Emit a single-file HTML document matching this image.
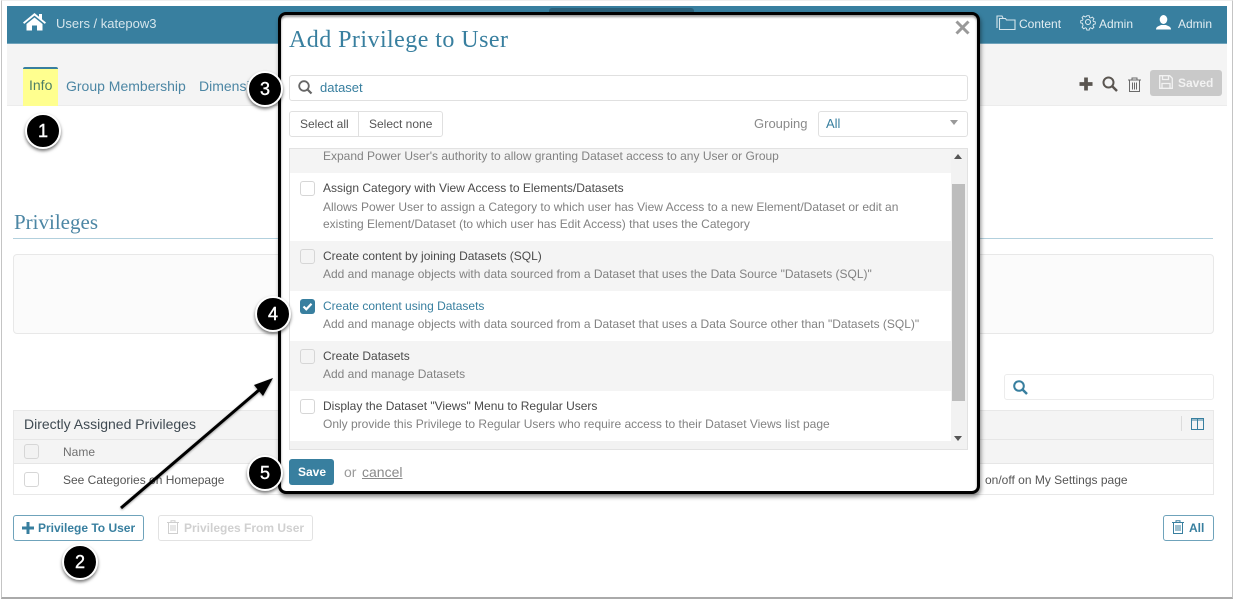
<!DOCTYPE html>
<html><head><meta charset="utf-8"><style>
*{box-sizing:border-box}
html,body{margin:0;padding:0;width:1234px;height:601px;overflow:hidden;background:#fff;font-family:"Liberation Sans",sans-serif;font-size:12px;color:#555}
.a{position:absolute;white-space:nowrap}
.b{position:absolute}
svg{position:absolute;overflow:visible}
.cb{position:absolute;width:15px;height:15px;background:#fff;border:1px solid #d6d6d6;border-radius:3px}
.num{position:absolute;width:36px;height:36px;border-radius:50%;background:#000;border:2px solid #fff;box-shadow:0 2px 3px rgba(0,0,0,.55);color:#fff;font-size:18px;font-weight:normal;-webkit-text-stroke:.4px #fff;text-align:center;line-height:32px}
.t{color:#4a4a4a;font-size:12px}
.d{color:#828282;font-size:12px}
.row{position:absolute;left:0;width:661px}
</style></head><body>
<div class="b" style="left:1px;top:0;width:1232px;height:599px;border:1px solid #c4c4c4;border-top-color:#eee;border-bottom:2px solid #aaa"></div>

<!-- top bar -->
<div class="b" style="left:7px;top:6px;width:1220px;height:38px;background:#387f9f;border-bottom:1px solid #6fa3bb"></div>
<div class="b" style="left:549px;top:8px;width:145px;height:6px;background:#2b6079;border-radius:3px 3px 0 0"></div>
<svg style="left:23px;top:13px" width="23" height="18" viewBox="0 0 23 18"><path d="M0 9.500 11.500 0 16 3.700V1h3v5.200l4 3.300-1.200 1.400L11.500 2.600 1.200 10.900z" fill="#fff"/><path d="M3.500 11 11.500 4.500 19.500 11v6.500h-5.500v-5h-5v5h-5.500z" fill="#fff"/></svg>
<div class="a" style="left:56px;top:16px;color:#d5e5ec;font-size:13px">Users / katepow3</div>
<svg style="left:996px;top:14px" width="20" height="17" viewBox="0 0 20 17" fill="none" stroke="#d5e5ec" stroke-width="1.100"><path d="M1 14V2h5l1 2"/><path d="M3.500 15.500V4.500h6l1 1.500h8.500v9.500z"/></svg>
<div class="a" style="left:1019px;top:17px;color:#e3eef3;font-size:12px">Content</div>
<svg style="left:1080px;top:14px" width="16" height="16" viewBox="0 0 16 16" fill="none" stroke="#e3eef3"><circle cx="8" cy="8" r="2.500"/><path d="M6.700 1h2.600l.4 2 1.300.6 1.800-1.100 1.800 1.800-1.100 1.800.6 1.300 2 .4v2.400l-2 .4-.6 1.300 1.100 1.800-1.800 1.800-1.800-1.100-1.300.6-.4 2H6.700l-.4-2-1.300-.6-1.800 1.100-1.800-1.800 1.100-1.800L1.900 9.400l-2-.4V6.600l2-.4.6-1.300-1.100-1.800 1.800-1.800 1.800 1.100 1.300-.6z" transform="translate(.8 .8) scale(.9)"/></svg>
<div class="a" style="left:1099px;top:17px;color:#e3eef3;font-size:12px">Admin</div>
<svg style="left:1156px;top:15px" width="15" height="15" viewBox="0 0 15 15" fill="#fff"><ellipse cx="7.500" cy="4.500" rx="3.800" ry="4.500"/><path d="M0 14.500c0-3 3-3.500 5-4.500h5c2 1 5 1.500 5 4.500z"/></svg>
<div class="a" style="left:1178px;top:17px;color:#e3eef3;font-size:12px">Admin</div>

<!-- tab bar -->
<div class="b" style="left:7px;top:44px;width:1220px;height:62px;background:#f4f4f4;border-bottom:1px solid #ececec"></div>
<div class="b" style="left:23px;top:67px;width:35px;height:39px;background:#ffff8f;border-top:2px solid #387f9f;border-radius:2px 2px 0 0"></div>
<div class="a" style="left:29px;top:77px;color:#4d7f66;font-size:14px">Info</div>
<div class="a" style="left:66px;top:78px;color:#4c86a4;font-size:14px">Group Membership</div>
<div class="a" style="left:199px;top:78px;color:#4c86a4;font-size:14px">Dimensions</div>

<svg style="left:1079px;top:77px" width="14" height="14" viewBox="0 0 14 14"><path d="M5 0h4v5h5v4H9v5H5V9H0V5h5z" transform="translate(.5 .5) scale(.93)" fill="#5a5550"/></svg>
<svg style="left:1102px;top:76px" width="16" height="16" viewBox="0 0 16 16" fill="none" stroke="#5a5550"><circle cx="6.500" cy="6.500" r="5" stroke-width="2"/><path d="M10.500 10.500 15 15" stroke-width="2.500"/></svg>
<svg style="left:1128px;top:77px" width="13" height="15" viewBox="0 0 13 15" fill="none" stroke="#6a6a6a"><path d="M0 3h13M4 3V1h5v2M1.500 3v11.500h10V3M4.500 5.500v7M6.500 5.500v7M8.500 5.500v7"/></svg>
<div class="b" style="left:1150px;top:70px;width:72px;height:26px;background:#c9c9c9;border-radius:3px"></div>
<svg style="left:1159px;top:75px" width="14" height="14" viewBox="0 0 14 14" fill="none" stroke="#f2f2f2" stroke-width="1.300"><path d="M.7.700h10l2.600 2.600v10H.7z"/><path d="M3.500 1v3.500h6V1M3 13V8.500h8V13"/></svg>
<div class="a" style="left:1178px;top:76px;color:#f2f2f2;font-size:12px;font-weight:bold">Saved</div>

<!-- privileges -->
<div class="a" style="left:14px;top:210px;font-family:'Liberation Serif',serif;font-size:21px;color:#4c86a4">Privileges</div>
<div class="b" style="left:13px;top:238px;width:1200px;height:1px;background:#b2d0dd"></div>
<div class="b" style="left:13px;top:254px;width:1201px;height:80px;background:#fbfbfb;border:1px solid #e8e8e8;border-radius:4px"></div>

<div class="b" style="left:1004px;top:374px;width:210px;height:26px;border:1px solid #ececec;border-radius:3px"></div>
<svg style="left:1013px;top:380px" width="15" height="15" viewBox="0 0 15 15" fill="none" stroke="#387f9f"><circle cx="6" cy="6" r="4.800" stroke-width="2"/><path d="M9.500 9.500 14 14" stroke-width="2.500"/></svg>

<div class="b" style="left:13px;top:410px;width:1201px;height:85px;border:1px solid #e8e8e8"></div>
<div class="b" style="left:14px;top:411px;width:1199px;height:29px;background:#f4f4f4;border-bottom:1px solid #e6e6e6"></div>
<div class="b" style="left:14px;top:440px;width:1199px;height:24px;background:#f4f4f4;border-bottom:1px solid #e6e6e6"></div>
<div class="a" style="left:24px;top:416px;color:#3f4a52;font-size:14px">Directly Assigned Privileges</div>
<div class="b" style="left:1181px;top:416px;width:1px;height:15px;background:#dcdcdc"></div>
<svg style="left:1191px;top:418px" width="13" height="12" viewBox="0 0 13 12" fill="none" stroke="#387f9f"><path d="M.5.500h12v11H.5zM6.500.500v11M.5 2h12"/></svg>
<div class="cb" style="left:24px;top:444px;background:#f2f2f2"></div>
<div class="a" style="left:63px;top:445px;color:#707070;font-size:12px">Name</div>
<div class="cb" style="left:24px;top:472px"></div>
<div class="a" style="left:63px;top:473px;color:#555;font-size:12px">See Categories on Homepage</div>
<div class="a" style="left:985px;top:473px;color:#555;font-size:12px">on/off on My Settings page</div>

<div class="b" style="left:13px;top:515px;width:131px;height:26px;border:1px solid #6fa3bb;border-radius:3px"></div>
<svg style="left:22px;top:522px" width="12" height="12" viewBox="0 0 12 12"><path d="M4.500 0h3v4.500H12v3H7.500V12h-3V7.500H0v-3h4.500z" fill="#387f9f"/></svg>
<div class="a" style="left:38px;top:521px;color:#387f9f;font-size:12px;font-weight:bold">Privilege To User</div>
<div class="b" style="left:158px;top:515px;width:155px;height:26px;border:1px solid #e2e2e2;border-radius:3px"></div>
<svg style="left:167px;top:520px" width="12" height="14" viewBox="0 0 12 14" fill="none" stroke="#cfcfcf"><path d="M0 2.500h12M4 2.500V.8h4v1.700M1.500 2.500v11h9v-11M4 5v6M6 5v6M8 5v6"/></svg>
<div class="a" style="left:184px;top:521px;color:#d0d0d0;font-size:12px;font-weight:bold">Privileges From User</div>
<div class="b" style="left:1163px;top:515px;width:51px;height:26px;border:1px solid #6fa3bb;border-radius:3px"></div>
<svg style="left:1172px;top:520px" width="12" height="14" viewBox="0 0 12 14" fill="none" stroke="#387f9f"><path d="M0 2.500h12M4 2.500V.8h4v1.700M1.500 2.500v11h9v-11M4 5v6M6 5v6M8 5v6"/></svg>
<div class="a" style="left:1189px;top:521px;color:#387f9f;font-size:12px;font-weight:bold">All</div>

<!-- arrow -->
<svg style="left:0;top:0" width="1234" height="601"><defs><filter id="s" x="-20%" y="-20%" width="140%" height="140%"><feDropShadow dx="0" dy="1" stdDeviation="1" flood-opacity=".4"/></filter></defs><g filter="url(#s)"><path d="M121 508 266 384" stroke="#000" stroke-width="3" fill="none"/><path d="M273 378 263 396 254 385z" fill="#000"/></g></svg>

<!-- modal -->
<div class="b" style="left:278px;top:12px;width:702px;height:482px;background:#fff;border:3px solid #000;border-radius:8px;box-shadow:1px 3px 4px rgba(0,0,0,.45),inset 0 2px 2px rgba(0,0,0,.4)"></div>
<div class="a" style="left:289px;top:27px;font-family:'Liberation Serif',serif;font-size:24px;color:#387f9f;letter-spacing:.45px">Add Privilege to User</div>
<svg style="left:955px;top:20px" width="15" height="15" viewBox="0 0 15 15"><path d="M1.500 1.500 13.500 13.500M13.500 1.500 1.500 13.500" stroke="#999" stroke-width="3"/></svg>

<div class="b" style="left:289px;top:75px;width:679px;height:26px;border:1px solid #e0e0e0;border-radius:3px"></div>
<svg style="left:298px;top:80px" width="15" height="15" viewBox="0 0 15 15" fill="none" stroke="#666"><circle cx="6" cy="6" r="4.800" stroke-width="1.800"/><path d="M9.500 9.500 13.500 13.500" stroke-width="2.200"/></svg>
<div class="a" style="left:320px;top:80px;color:#387f9f;font-size:13px">dataset</div>

<div class="b" style="left:289px;top:111px;width:70px;height:26px;border:1px solid #e0e0e0;border-radius:3px 0 0 3px"></div>
<div class="b" style="left:358px;top:111px;width:85px;height:26px;border:1px solid #e0e0e0;border-radius:0 3px 3px 0"></div>
<div class="a" style="left:300px;top:117px;color:#555;font-size:12px">Select all</div>
<div class="a" style="left:369px;top:117px;color:#555;font-size:12px">Select none</div>
<div class="a" style="left:754px;top:116px;color:#8a8a8a;font-size:13px">Grouping</div>
<div class="b" style="left:818px;top:111px;width:150px;height:26px;border:1px solid #e0e0e0;border-radius:3px"></div>
<div class="a" style="left:826px;top:116px;color:#387f9f;font-size:13px">All</div>
<div class="b" style="left:950px;top:120px;width:0;height:0;border:4px solid transparent;border-top:5px solid #999;border-left-width:4.500px;border-right-width:4.500px"></div>

<!-- list -->
<div class="b" style="left:289px;top:148px;width:679px;height:302px;border:1px solid #e2e2e2;background:#f2f2f2;overflow:hidden">
  <div class="row" style="top:0;height:24px;background:#f4f4f4"></div>
  <div class="row" style="top:24px;height:68px;background:#fff"></div>
  <div class="row" style="top:92px;height:50px;background:#f4f4f4"></div>
  <div class="row" style="top:142px;height:50px;background:#fff"></div>
  <div class="row" style="top:192px;height:50px;background:#f4f4f4"></div>
  <div class="row" style="top:242px;height:50px;background:#fff"></div>
  <div class="b" style="left:662px;top:35px;width:13px;height:217px;background:#bdbdbd"></div>
  <div class="b" style="left:664px;top:5px;width:0;height:0;border:4px solid transparent;border-bottom:5px solid #555;border-top:0"></div>
  <div class="b" style="left:664px;top:287px;width:0;height:0;border:4px solid transparent;border-top:5px solid #555;border-bottom:0"></div>
</div>
<div class="a d" style="left:323px;top:149px">Expand Power User's authority to allow granting Dataset access to any User or Group</div>

<div class="cb" style="left:300px;top:181px"></div>
<div class="a t" style="left:323px;top:181px">Assign Category with View Access to Elements/Datasets</div>
<div class="a d" style="left:323px;top:200px">Allows Power User to assign a Category to which user has View Access to a new Element/Dataset or edit an</div>
<div class="a d" style="left:323px;top:217px">existing Element/Dataset (to which user has Edit Access) that uses the Category</div>

<div class="cb" style="left:300px;top:249px;background:#f4f4f4"></div>
<div class="a t" style="left:323px;top:249px">Create content by joining Datasets (SQL)</div>
<div class="a d" style="left:323px;top:267px">Add and manage objects with data sourced from a Dataset that uses the Data Source "Datasets (SQL)"</div>

<div class="b" style="left:300px;top:299px;width:15px;height:15px;background:#387f9f;border-radius:3px"></div>
<svg style="left:300px;top:299px" width="15" height="15" viewBox="0 0 15 15"><path d="M3.500 7.500 6.300 10.300 11.500 4.800" fill="none" stroke="#fff" stroke-width="2.200"/></svg>
<div class="a" style="left:323px;top:299px;color:#387f9f;font-size:12px">Create content using Datasets</div>
<div class="a d" style="left:323px;top:317px">Add and manage objects with data sourced from a Dataset that uses a Data Source other than "Datasets (SQL)"</div>

<div class="cb" style="left:300px;top:349px;background:#f4f4f4"></div>
<div class="a t" style="left:323px;top:349px">Create Datasets</div>
<div class="a d" style="left:323px;top:367px">Add and manage Datasets</div>

<div class="cb" style="left:300px;top:399px"></div>
<div class="a t" style="left:323px;top:399px">Display the Dataset "Views" Menu to Regular Users</div>
<div class="a d" style="left:323px;top:417px">Only provide this Privilege to Regular Users who require access to their Dataset Views list page</div>

<div class="b" style="left:289px;top:459px;width:45px;height:26px;background:#387f9f;border-radius:3px"></div>
<div class="a" style="left:298px;top:465px;color:#fff;font-size:12px;font-weight:bold">Save</div>
<div class="a" style="left:344px;top:464px;color:#9a9a9a;font-size:14px">or</div>
<div class="a" style="left:362px;top:464px;color:#8a8a8a;font-size:14px;text-decoration:underline">cancel</div>

<!-- numbers -->
<div class="num" style="left:25px;top:113px">1</div>
<div class="num" style="left:62px;top:544px">2</div>
<div class="num" style="left:247px;top:71px">3</div>
<div class="num" style="left:255px;top:296px">4</div>
<div class="num" style="left:247px;top:455px">5</div>
</body></html>
